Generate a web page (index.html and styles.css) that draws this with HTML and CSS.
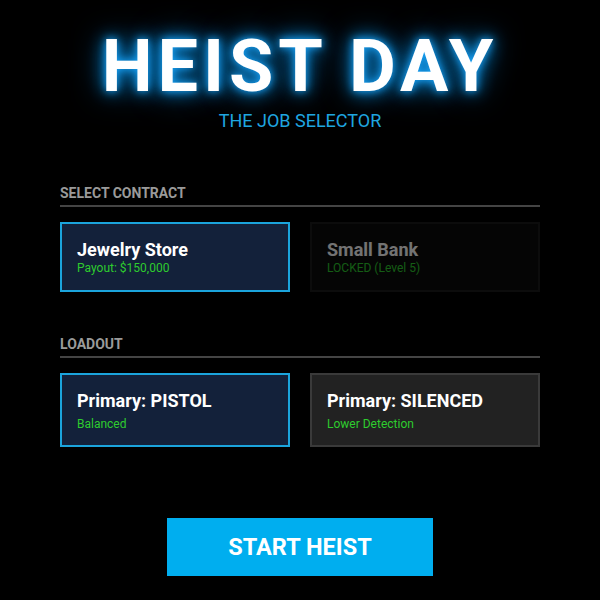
FILE: index.html
```html
<!DOCTYPE html>
<html lang="en">
<head>
    <meta charset="UTF-8">
    <meta name="viewport" content="width=device-width, initial-scale=1.0">
    <title>Heist Day</title>
    <link rel="stylesheet" href="styles.css">
</head>
<body>
    <div class="app">
        <header class="header">
            <h1 class="title">HEIST DAY</h1>
            <div class="subtitle">THE JOB SELECTOR</div>
        </header>

        <section class="section">
            <h2 class="section-label">SELECT CONTRACT</h2>
            <div class="options">
                <div class="option selected">
                    <div class="option-name">Jewelry Store</div>
                    <div class="option-info">Payout: $150,000</div>
                </div>
                <div class="option locked">
                    <div class="option-name">Small Bank</div>
                    <div class="option-info">LOCKED (Level 5)</div>
                </div>
            </div>
        </section>

        <section class="section">
            <h2 class="section-label">LOADOUT</h2>
            <div class="options">
                <div class="option tall selected">
                    <div class="option-name">Primary: PISTOL</div>
                    <div class="option-info">Balanced</div>
                </div>
                <div class="option tall">
                    <div class="option-name">Primary: SILENCED</div>
                    <div class="option-info">Lower Detection</div>
                </div>
            </div>
        </section>

        <div class="actions">
            <button class="start-btn">START HEIST</button>
        </div>
    </div>
</body>
</html>
```

FILE: styles.css
```css
body {
    background-color: #000;
    color: #fff;
    font-family: Roboto, 'Liberation Sans', sans-serif;
    margin: 0;
    padding: 0;
}

.app {
    width: 480px;
    margin: 0 auto;
    padding-top: 31px;
}

.header {
    text-align: center;
}

.title {
    margin: 0;
    font-size: 72px;
    line-height: 1;
    font-weight: 700;
    letter-spacing: 5px;
    color: #fff;
    text-shadow: 0 0 8px #1aa8ff, 0 0 18px #0a8fe0, 0 0 32px rgba(0, 140, 230, 0.7);
}

.subtitle {
    margin-top: 7px;
    font-size: 18px;
    color: #1fa6e0;
}

.section {
    margin-top: 54px;
}

.section + .section {
    margin-top: 44px;
}

.section-label {
    margin: 0;
    padding-bottom: 4px;
    font-size: 14px;
    font-weight: 700;
    color: #9a9a9a;
    border-bottom: 2px solid #444;
}

.options {
    display: grid;
    grid-template-columns: 1fr 1fr;
    gap: 20px;
    margin-top: 15px;
}

.option {
    height: 70px;
    box-sizing: border-box;
    padding: 0 15px;
    display: flex;
    flex-direction: column;
    justify-content: center;
    background-color: #222;
    border: 2px solid #3a3a3a;
}

.option.tall {
    height: 74px;
}

.option.selected {
    background-color: #13213a;
    border-color: #1ba4dc;
}

.option.locked {
    background-color: #0d0d0d;
    border-color: #1c1c1c;
    opacity: 0.45;
}

.option-name {
    font-size: 18px;
    font-weight: 700;
    color: #fff;
}

.option-info {
    font-size: 12px;
    color: #2ecc2e;
    margin-top: 1px;
}

.tall .option-info {
    margin-top: 6px;
}

.actions {
    display: flex;
    justify-content: center;
    margin-top: 71px;
}

.start-btn {
    width: 266px;
    height: 58px;
    border: none;
    background-color: #00aeef;
    color: #fff;
    font-family: Roboto, 'Liberation Sans', sans-serif;
    font-size: 23.5px;
    font-weight: 700;
}
```
